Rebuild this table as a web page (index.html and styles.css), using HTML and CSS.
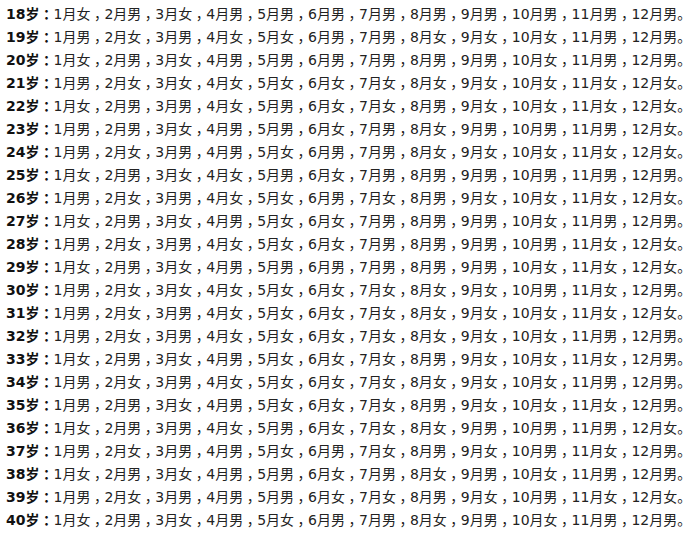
FILE: index.html
```html
<!DOCTYPE html>
<html lang="zh-Hans">
<head>
<meta charset="utf-8">
<title>生男生女表</title>
<link rel="stylesheet" href="styles.css">
</head>
<body>
<div class="table">
<p class="row"><b class="age">18岁<span class="c">：</span></b>1月女<span class="c">，</span>2月男<span class="c">，</span>3月女<span class="c">，</span>4月男<span class="c">，</span>5月男<span class="c">，</span>6月男<span class="c">，</span>7月男<span class="c">，</span>8月男<span class="c">，</span>9月男<span class="c">，</span>10月男<span class="c">，</span>11月男<span class="c">，</span>12月男。</p>
<p class="row"><b class="age">19岁<span class="c">：</span></b>1月男<span class="c">，</span>2月女<span class="c">，</span>3月男<span class="c">，</span>4月女<span class="c">，</span>5月女<span class="c">，</span>6月男<span class="c">，</span>7月男<span class="c">，</span>8月女<span class="c">，</span>9月女<span class="c">，</span>10月女<span class="c">，</span>11月男<span class="c">，</span>12月男。</p>
<p class="row"><b class="age">20岁<span class="c">：</span></b>1月女<span class="c">，</span>2月男<span class="c">，</span>3月女<span class="c">，</span>4月男<span class="c">，</span>5月男<span class="c">，</span>6月男<span class="c">，</span>7月男<span class="c">，</span>8月男<span class="c">，</span>9月男<span class="c">，</span>10月女<span class="c">，</span>11月男<span class="c">，</span>12月男。</p>
<p class="row"><b class="age">21岁<span class="c">：</span></b>1月男<span class="c">，</span>2月女<span class="c">，</span>3月女<span class="c">，</span>4月女<span class="c">，</span>5月女<span class="c">，</span>6月女<span class="c">，</span>7月女<span class="c">，</span>8月女<span class="c">，</span>9月女<span class="c">，</span>10月女<span class="c">，</span>11月女<span class="c">，</span>12月女。</p>
<p class="row"><b class="age">22岁<span class="c">：</span></b>1月女<span class="c">，</span>2月男<span class="c">，</span>3月男<span class="c">，</span>4月女<span class="c">，</span>5月男<span class="c">，</span>6月女<span class="c">，</span>7月女<span class="c">，</span>8月男<span class="c">，</span>9月女<span class="c">，</span>10月女<span class="c">，</span>11月女<span class="c">，</span>12月女。</p>
<p class="row"><b class="age">23岁<span class="c">：</span></b>1月男<span class="c">，</span>2月男<span class="c">，</span>3月女<span class="c">，</span>4月男<span class="c">，</span>5月男<span class="c">，</span>6月女<span class="c">，</span>7月男<span class="c">，</span>8月女<span class="c">，</span>9月男<span class="c">，</span>10月男<span class="c">，</span>11月男<span class="c">，</span>12月女。</p>
<p class="row"><b class="age">24岁<span class="c">：</span></b>1月男<span class="c">，</span>2月女<span class="c">，</span>3月男<span class="c">，</span>4月男<span class="c">，</span>5月女<span class="c">，</span>6月男<span class="c">，</span>7月男<span class="c">，</span>8月女<span class="c">，</span>9月女<span class="c">，</span>10月女<span class="c">，</span>11月女<span class="c">，</span>12月女。</p>
<p class="row"><b class="age">25岁<span class="c">：</span></b>1月女<span class="c">，</span>2月男<span class="c">，</span>3月女<span class="c">，</span>4月女<span class="c">，</span>5月男<span class="c">，</span>6月女<span class="c">，</span>7月男<span class="c">，</span>8月男<span class="c">，</span>9月男<span class="c">，</span>10月男<span class="c">，</span>11月男<span class="c">，</span>12月男。</p>
<p class="row"><b class="age">26岁<span class="c">：</span></b>1月男<span class="c">，</span>2月女<span class="c">，</span>3月男<span class="c">，</span>4月女<span class="c">，</span>5月女<span class="c">，</span>6月男<span class="c">，</span>7月女<span class="c">，</span>8月男<span class="c">，</span>9月女<span class="c">，</span>10月女<span class="c">，</span>11月女<span class="c">，</span>12月女。</p>
<p class="row"><b class="age">27岁<span class="c">：</span></b>1月女<span class="c">，</span>2月男<span class="c">，</span>3月女<span class="c">，</span>4月男<span class="c">，</span>5月女<span class="c">，</span>6月女<span class="c">，</span>7月男<span class="c">，</span>8月男<span class="c">，</span>9月男<span class="c">，</span>10月女<span class="c">，</span>11月男<span class="c">，</span>12月男。</p>
<p class="row"><b class="age">28岁<span class="c">：</span></b>1月男<span class="c">，</span>2月女<span class="c">，</span>3月男<span class="c">，</span>4月女<span class="c">，</span>5月女<span class="c">，</span>6月女<span class="c">，</span>7月男<span class="c">，</span>8月男<span class="c">，</span>9月男<span class="c">，</span>10月男<span class="c">，</span>11月女<span class="c">，</span>12月女。</p>
<p class="row"><b class="age">29岁<span class="c">：</span></b>1月女<span class="c">，</span>2月男<span class="c">，</span>3月女<span class="c">，</span>4月男<span class="c">，</span>5月男<span class="c">，</span>6月男<span class="c">，</span>7月男<span class="c">，</span>8月男<span class="c">，</span>9月男<span class="c">，</span>10月女<span class="c">，</span>11月女<span class="c">，</span>12月女。</p>
<p class="row"><b class="age">30岁<span class="c">：</span></b>1月男<span class="c">，</span>2月女<span class="c">，</span>3月女<span class="c">，</span>4月女<span class="c">，</span>5月女<span class="c">，</span>6月女<span class="c">，</span>7月女<span class="c">，</span>8月女<span class="c">，</span>9月女<span class="c">，</span>10月男<span class="c">，</span>11月女<span class="c">，</span>12月男。</p>
<p class="row"><b class="age">31岁<span class="c">：</span></b>1月男<span class="c">，</span>2月女<span class="c">，</span>3月男<span class="c">，</span>4月女<span class="c">，</span>5月女<span class="c">，</span>6月女<span class="c">，</span>7月女<span class="c">，</span>8月女<span class="c">，</span>9月女<span class="c">，</span>10月女<span class="c">，</span>11月女<span class="c">，</span>12月女。</p>
<p class="row"><b class="age">32岁<span class="c">：</span></b>1月男<span class="c">，</span>2月女<span class="c">，</span>3月男<span class="c">，</span>4月女<span class="c">，</span>5月女<span class="c">，</span>6月女<span class="c">，</span>7月女<span class="c">，</span>8月女<span class="c">，</span>9月女<span class="c">，</span>10月女<span class="c">，</span>11月男<span class="c">，</span>12月男。</p>
<p class="row"><b class="age">33岁<span class="c">：</span></b>1月女<span class="c">，</span>2月男<span class="c">，</span>3月女<span class="c">，</span>4月男<span class="c">，</span>5月女<span class="c">，</span>6月女<span class="c">，</span>7月女<span class="c">，</span>8月男<span class="c">，</span>9月女<span class="c">，</span>10月女<span class="c">，</span>11月女<span class="c">，</span>12月男。</p>
<p class="row"><b class="age">34岁<span class="c">：</span></b>1月男<span class="c">，</span>2月女<span class="c">，</span>3月男<span class="c">，</span>4月女<span class="c">，</span>5月女<span class="c">，</span>6月女<span class="c">，</span>7月女<span class="c">，</span>8月女<span class="c">，</span>9月女<span class="c">，</span>10月女<span class="c">，</span>11月男<span class="c">，</span>12月男。</p>
<p class="row"><b class="age">35岁<span class="c">：</span></b>1月男<span class="c">，</span>2月男<span class="c">，</span>3月女<span class="c">，</span>4月男<span class="c">，</span>5月女<span class="c">，</span>6月女<span class="c">，</span>7月女<span class="c">，</span>8月男<span class="c">，</span>9月女<span class="c">，</span>10月女<span class="c">，</span>11月女<span class="c">，</span>12月男。</p>
<p class="row"><b class="age">36岁<span class="c">：</span></b>1月女<span class="c">，</span>2月男<span class="c">，</span>3月男<span class="c">，</span>4月女<span class="c">，</span>5月男<span class="c">，</span>6月女<span class="c">，</span>7月女<span class="c">，</span>8月女<span class="c">，</span>9月男<span class="c">，</span>10月男<span class="c">，</span>11月男<span class="c">，</span>12月女。</p>
<p class="row"><b class="age">37岁<span class="c">：</span></b>1月男<span class="c">，</span>2月女<span class="c">，</span>3月男<span class="c">，</span>4月男<span class="c">，</span>5月女<span class="c">，</span>6月男<span class="c">，</span>7月女<span class="c">，</span>8月男<span class="c">，</span>9月女<span class="c">，</span>10月男<span class="c">，</span>11月女<span class="c">，</span>12月男。</p>
<p class="row"><b class="age">38岁<span class="c">：</span></b>1月女<span class="c">，</span>2月男<span class="c">，</span>3月女<span class="c">，</span>4月男<span class="c">，</span>5月男<span class="c">，</span>6月女<span class="c">，</span>7月男<span class="c">，</span>8月女<span class="c">，</span>9月男<span class="c">，</span>10月女<span class="c">，</span>11月男<span class="c">，</span>12月男。</p>
<p class="row"><b class="age">39岁<span class="c">：</span></b>1月男<span class="c">，</span>2月女<span class="c">，</span>3月男<span class="c">，</span>4月男<span class="c">，</span>5月男<span class="c">，</span>6月女<span class="c">，</span>7月女<span class="c">，</span>8月男<span class="c">，</span>9月女<span class="c">，</span>10月男<span class="c">，</span>11月女<span class="c">，</span>12月女。</p>
<p class="row"><b class="age">40岁<span class="c">：</span></b>1月女<span class="c">，</span>2月男<span class="c">，</span>3月女<span class="c">，</span>4月男<span class="c">，</span>5月女<span class="c">，</span>6月男<span class="c">，</span>7月男<span class="c">，</span>8月女<span class="c">，</span>9月男<span class="c">，</span>10月女<span class="c">，</span>11月男<span class="c">，</span>12月男。</p>
</div>
</body>
</html>
```
FILE: styles.css
```css
html, body {
  margin: 0;
  padding: 0;
  background: #ffffff;
}

body {
  font-family: "DejaVu Sans", "Noto Sans CJK SC", sans-serif;
  font-size: 14px;
  color: #222222;
}

.table {
  display: flex;
  flex-direction: column;
  padding: 3px 0 0 6px;
}

.row {
  margin: 0;
  height: 23px;
  line-height: 23px;
  white-space: nowrap;
}

.age {
  font-weight: bold;
  color: #111111;
}

/* centre the full-width punctuation in its em box */
.c {
  font-weight: normal;
  font-feature-settings: "halt";
  padding: 0 3.5px;
}

.age .c {
  font-weight: bold;
}
```
